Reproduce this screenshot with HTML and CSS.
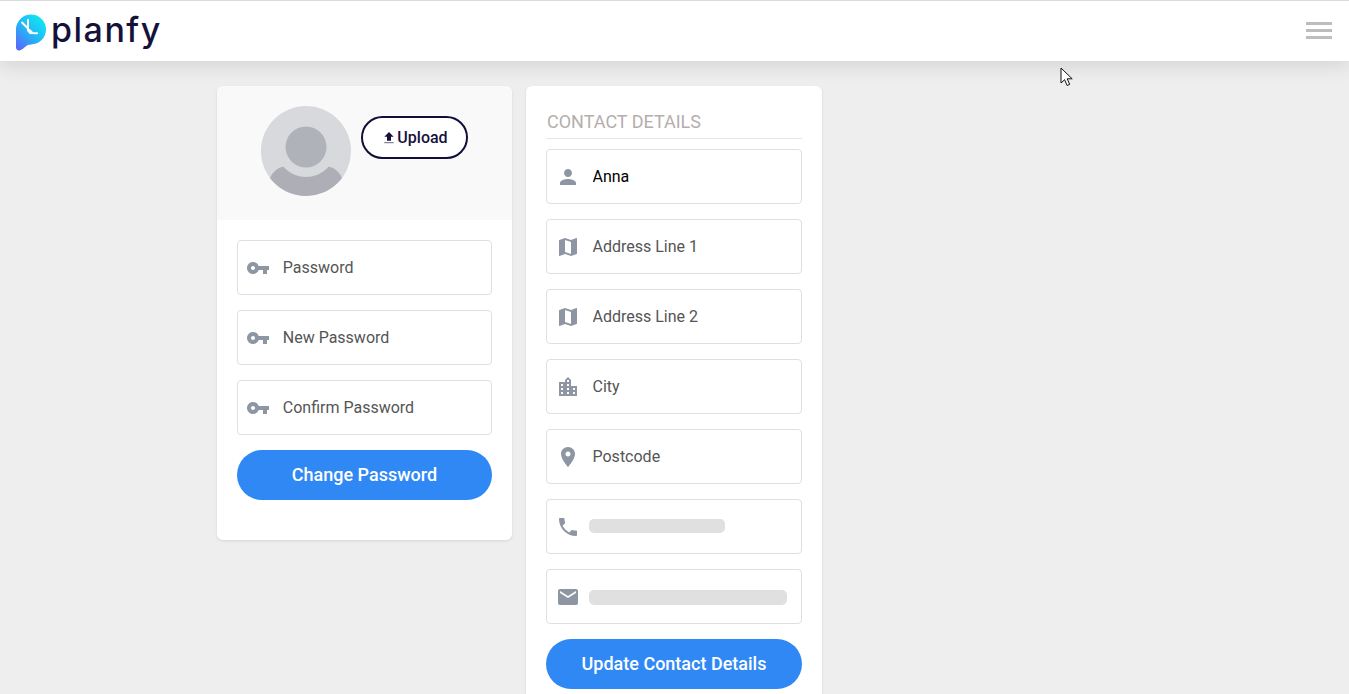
FILE: index.html
```html
<!DOCTYPE html>
<html lang="en">
<head>
<meta charset="utf-8">
<title>Planfy</title>
<link rel="stylesheet" href="styles.css">
</head>
<body>
<svg class="defs" width="0" height="0" aria-hidden="true">
  <symbol id="i-key" viewBox="0 0 24 24"><path d="M12.65 10C11.83 7.67 9.61 6 7 6c-3.31 0-6 2.69-6 6s2.69 6 6 6c2.61 0 4.83-1.67 5.65-4H17v4h4v-4h2v-4H12.65zM7 14c-1.1 0-2-.9-2-2s.9-2 2-2 2 .9 2 2-.9 2-2 2z"/></symbol>
  <symbol id="i-person" viewBox="0 0 24 24"><path d="M12 12c2.21 0 4-1.79 4-4s-1.79-4-4-4-4 1.79-4 4 1.79 4 4 4zm0 2c-2.67 0-8 1.34-8 4v2h16v-2c0-2.66-5.33-4-8-4z"/></symbol>
  <symbol id="i-map" viewBox="0 0 24 24"><path d="M20.5 3l-.16.03L15 5.1 9 3 3.36 4.9c-.21.07-.36.25-.36.48V20.5c0 .28.22.5.5.5l.16-.03L9 18.9l6 2.1 5.64-1.9c.21-.07.36-.25.36-.48V3.5c0-.28-.22-.5-.5-.5zM15 19l-6-2.11V5l6 2.11V19z"/></symbol>
  <symbol id="i-city" viewBox="0 0 24 24"><path d="M15 11V5l-3-3-3 3v2H3v14h18V11h-6zm-8 8H5v-2h2v2zm0-4H5v-2h2v2zm0-4H5V9h2v2zm6 8h-2v-2h2v2zm0-4h-2v-2h2v2zm0-4h-2V9h2v2zm0-4h-2V5h2v2zm6 12h-2v-2h2v2zm0-4h-2v-2h2v2z"/></symbol>
  <symbol id="i-place" viewBox="0 0 24 24"><path d="M12 2C8.13 2 5 5.13 5 9c0 5.25 7 13 7 13s7-7.75 7-13c0-3.87-3.13-7-7-7zm0 9.5c-1.38 0-2.5-1.12-2.5-2.5s1.12-2.5 2.5-2.5 2.5 1.12 2.5 2.5-1.12 2.5-2.5 2.5z"/></symbol>
  <symbol id="i-phone" viewBox="0 0 24 24"><path d="M6.62 10.79c1.44 2.83 3.76 5.14 6.59 6.59l2.2-2.2c.27-.27.67-.36 1.02-.24 1.12.37 2.33.57 3.57.57.55 0 1 .45 1 1V20c0 .55-.45 1-1 1-9.39 0-17-7.61-17-17 0-.55.45-1 1-1h3.5c.55 0 1 .45 1 1 0 1.25.2 2.45.57 3.57.11.35.03.74-.25 1.02l-2.2 2.2z"/></symbol>
  <symbol id="i-mail" viewBox="0 0 24 24"><path d="M20 4H4c-1.1 0-1.99.9-1.99 2L2 18c0 1.1.9 2 2 2h16c1.1 0 2-.9 2-2V6c0-1.1-.9-2-2-2zm0 4l-8 5-8-5V6l8 5 8-5v2z"/></symbol>
</svg>

<header class="topbar">
  <a class="brand" href="#">
    <svg class="brand-mark" width="32" height="38" viewBox="0 0 32 38">
      <defs>
        <linearGradient id="brandGrad" x1="0.85" y1="0.1" x2="0.1" y2="1">
          <stop offset="0" stop-color="#0fe6f2"/>
          <stop offset="0.5" stop-color="#25b4f6"/>
          <stop offset="1" stop-color="#5a66fb"/>
        </linearGradient>
      </defs>
      <path fill="url(#brandGrad)" d="M1 16.5a15 15 0 1 1 15 15c-2.500 0-4 .8-6 2.600-2 1.700-3.600 3-5.500 3.300-2 .3-3.500-1-3.500-3.400z"/>
      <path d="M7 9.500l10.500 10.500M13 7v10.500l2 2.500 7 .3" fill="none" stroke="#fff" stroke-width="2" stroke-linecap="round" stroke-linejoin="round"/>
    </svg>
    <span class="brand-name">planfy</span>
  </a>
  <button class="menu-btn" type="button" aria-label="Menu"><span></span><span></span><span></span></button>
</header>

<main class="content">
  <section class="card card-left">
    <div class="profile-head">
      <svg class="avatar" width="90" height="90" viewBox="0 0 90 90">
        <defs><clipPath id="avatarClip"><circle cx="45" cy="45" r="45"/></clipPath></defs>
        <circle cx="45" cy="45" r="45" fill="#d8d9dd"/>
        <g clip-path="url(#avatarClip)">
          <path d="M0 90V84L9 72C12 65 18 60 27 60h36c9 0 15 5 18 12l9 12v6z" fill="#adaeb6"/>
          <circle cx="45" cy="41" r="30" fill="#d8d9dd"/>
          <circle cx="45" cy="41" r="20.500" fill="#b0b2ba"/>
        </g>
      </svg>
      <button class="upload-btn" type="button">
        <svg class="upload-icon" width="16" height="16" viewBox="0 0 24 24"><path fill="#14123a" d="M9 16h6v-6h4l-7-7-7 7h4z"/><path fill="#85849a" d="M5 18h14v2H5z"/></svg>
        <span>Upload</span>
      </button>
    </div>
    <form class="form form-left">
      <label class="field"><svg class="icon"><use href="#i-key"/></svg><input type="password" placeholder="Password"></label>
      <label class="field"><svg class="icon"><use href="#i-key"/></svg><input type="password" placeholder="New Password"></label>
      <label class="field"><svg class="icon"><use href="#i-key"/></svg><input type="password" placeholder="Confirm Password"></label>
      <button class="primary-btn" type="button">Change Password</button>
    </form>
  </section>

  <section class="card card-right">
    <h2 class="card-title">CONTACT DETAILS</h2>
    <form class="form">
      <label class="field"><svg class="icon"><use href="#i-person"/></svg><input type="text" value="Anna"></label>
      <label class="field"><svg class="icon"><use href="#i-map"/></svg><input type="text" placeholder="Address Line 1"></label>
      <label class="field"><svg class="icon"><use href="#i-map"/></svg><input type="text" placeholder="Address Line 2"></label>
      <label class="field"><svg class="icon"><use href="#i-city"/></svg><input type="text" placeholder="City"></label>
      <label class="field"><svg class="icon"><use href="#i-place"/></svg><input type="text" placeholder="Postcode"></label>
      <div class="field"><svg class="icon"><use href="#i-phone"/></svg><span class="redacted redacted-phone"></span></div>
      <div class="field"><svg class="icon"><use href="#i-mail"/></svg><span class="redacted redacted-mail"></span></div>
      <button class="primary-btn" type="button">Update Contact Details</button>
    </form>
  </section>
</main>

<svg class="cursor" width="14" height="20" viewBox="0 0 14 20"><path d="M1 1v15l3.600-3.300 2.500 5.800 2.600-1.100-2.500-5.600h5z" fill="#fff" stroke="#111" stroke-width="1"/></svg>
</body>
</html>
```
FILE: styles.css
```css
* { box-sizing: border-box; }
html, body { height: 100%; }
body {
  margin: 0;
  overflow: hidden;
  background: #eeeeee;
  font-family: Roboto, "Liberation Sans", sans-serif;
  font-size: 16px;
  color: #000;
}
.defs { position: absolute; }

.topbar {
  position: relative;
  z-index: 2;
  height: 61px;
  border-top: 1px solid #dcdcdf;
  background: #fff;
  box-shadow: 0 2px 22px rgba(0, 0, 0, 0.14);
  display: flex;
  align-items: center;
  justify-content: space-between;
  padding: 0 17px 0 15px;
}
.brand {
  display: flex;
  align-items: center;
  gap: 4px;
  text-decoration: none;
}
.brand-mark { display: block; margin-top: 1px; }
.brand-name {
  font-family: Inter, sans-serif;
  font-size: 34px;
  line-height: 40px;
  font-weight: 500;
  letter-spacing: 1.5px;
  color: #14123a;
  margin-top: -3px;
}
.menu-btn {
  width: 26px;
  padding: 0;
  border: 0;
  background: none;
  display: flex;
  flex-direction: column;
  gap: 4px;
  margin-bottom: 1px;
}
.menu-btn span { display: block; height: 3px; background: #bdbdbd; }

.content {
  display: flex;
  align-items: flex-start;
  gap: 14px;
  padding: 25px 0 0 217px;
}
.card {
  background: #fff;
  border-radius: 6px;
  box-shadow: 0 1px 3px rgba(0, 0, 0, 0.1);
  overflow: hidden;
}
.card-left { width: 295px; height: 454px; }
.card-right { width: 296px; padding: 20px 20px 20px; }

.profile-head {
  height: 134px;
  background: #f9f9f9;
  display: flex;
  padding: 20px 0 0 44px;
  gap: 10px;
}
.avatar { display: block; flex: none; }
.upload-btn {
  width: 107px;
  height: 43px;
  margin-top: 10px;
  border: 2px solid #0f0f38;
  border-radius: 22px;
  background: #fff;
  display: flex;
  align-items: center;
  justify-content: center;
  padding: 0;
  font-family: inherit;
  font-size: 16px;
  font-weight: 500;
  color: #14123a;
}
.upload-icon { display: block; }

.form { display: flex; flex-direction: column; gap: 15px; }
.form-left { padding: 20px 20px 0; }

.card-title {
  margin: 0 0 10px;
  height: 33px;
  padding: 2px 0 0 1px;
  border-bottom: 1px solid #e6e6e6;
  font-size: 18px;
  line-height: 28px;
  font-weight: 400;
  color: #b5aeac;
}

.field {
  height: 55px;
  border: 1px solid #dfdfdf;
  border-radius: 4px;
  background: #fff;
  display: flex;
  align-items: center;
  padding-left: 8.5px;
}
.form-left .field { padding-left: 8px; }
.icon {
  width: 24px;
  height: 24px;
  flex: none;
  fill: #8d96a2;
  margin-top: 1px;
}
.field input {
  flex: 1;
  min-width: 0;
  height: 100%;
  margin-left: 13px;
  padding: 0;
  border: 0;
  outline: 0;
  background: transparent;
  font-family: inherit;
  font-size: 16px;
  color: #000;
}
.form-left .field input { margin-left: 12.75px; }
.field input::placeholder { color: #555; opacity: 1; }

.redacted { display: block; margin-left: 9.5px; background: #e0e0e0; border-radius: 5px; }
.redacted-phone { width: 136px; height: 14px; margin-top: -1px; }
.redacted-mail { width: 198px; height: 15px; margin-top: 1px; }

.primary-btn {
  height: 50px;
  border: 0;
  border-radius: 25px;
  padding: 0 0 2px;
  background: #3088f4;
  color: #fff;
  font-family: inherit;
  font-size: 18px;
  font-weight: 500;
}

.cursor { position: absolute; left: 1060px; top: 67px; z-index: 3; }
```
